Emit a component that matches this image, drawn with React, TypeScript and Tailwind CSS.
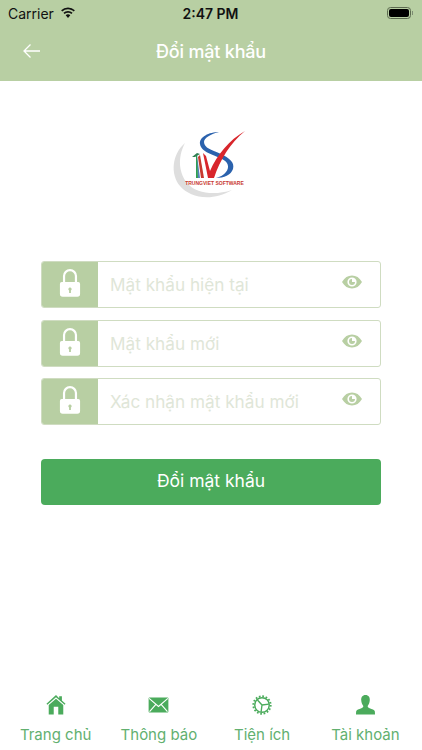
import React from "react";

const font = { fontFamily: "Inter, 'Noto Sans', sans-serif" };

function Lock() {
  return (
    <svg width="22" height="29" viewBox="0 0 24 31">
      <path d="M5.500 16V8.500a6.500 6.500 0 0 1 13 0V16" fill="none" stroke="#fff" strokeWidth="2.400" />
      <path fillRule="evenodd" fill="#fff" d="M3 15h18a2 2 0 0 1 2 2v11a3 3 0 0 1-3 3H4a3 3 0 0 1-3-3V17a2 2 0 0 1 2-2zm9 6a1.800 1.800 0 0 0-1 3.300V27h2v-2.700A1.800 1.800 0 0 0 12 21z" />
    </svg>
  );
}

function Eye() {
  return (
    <svg width="20" height="14" viewBox="0 0 20 14">
      <path fillRule="evenodd" fill="#b8cfa3" d="M0 7C2.500 2.600 6 .5 10 .5S17.500 2.600 20 7c-2.500 4.400-6 6.500-10 6.500S2.500 11.400 0 7zm10-4.600a4.600 4.600 0 1 0 0 9.200 4.600 4.600 0 0 0 0-9.200z" />
      <path fill="#b8cfa3" d="M10 4a3 3 0 1 0 3 3h-3z" />
    </svg>
  );
}

function Field({ label }: { label: string }) {
  return (
    <div className="flex h-[47px] items-stretch overflow-hidden rounded-[3px] border border-[#cfdcc1] bg-white">
      <div className="flex w-[56px] shrink-0 items-center justify-center bg-[#b8cfa3] pb-[4px]">
        <Lock />
      </div>
      <div className="flex flex-1 items-center justify-between pl-[12px] pr-[18px]">
        <span className="pt-[1px] text-[17.200px] text-[#dfe6d8]">{label}</span>
        <span className="mb-[5px] flex"><Eye /></span>
      </div>
    </div>
  );
}

function Tab({ label, icon }: { label: string; icon: React.ReactNode }) {
  return (
    <div className="flex flex-1 flex-col items-center">
      <div className="flex h-[20px] items-center justify-center">{icon}</div>
      <span className="mt-[10px] text-[15px] leading-[20px] text-[#62b070]">{label}</span>
    </div>
  );
}

export default function App() {
  return (
    <div style={font} className="flex h-[750px] w-[422px] flex-col overflow-hidden bg-white">
      <header className="h-[81px] shrink-0 bg-[#b8cfa3]">
        <div className="flex h-[24px] items-center justify-between pl-[8px] pr-[9px] pt-[2px] text-[#111]">
          <div className="flex w-[120px] items-center gap-[6px] text-[14px]">
            <span>Carrier</span>
            <svg width="16" height="12" viewBox="0 0 16 12">
              <path fill="#111" d="M8 2.300c2.200 0 4.200.9 5.700 2.300l1.200-1.300A10 10 0 0 0 8 .5a10 10 0 0 0-6.900 2.800l1.200 1.300A8.200 8.200 0 0 1 8 2.300z" />
              <path fill="#111" d="M8 5.700c1.300 0 2.500.5 3.400 1.300l1.200-1.300A6.600 6.600 0 0 0 8 3.900a6.600 6.600 0 0 0-4.600 1.800L4.600 7A5 5 0 0 1 8 5.700z" />
              <path fill="#111" d="M8 7.300c-.9 0-1.700.3-2.300.9L8 11l2.300-2.800c-.6-.6-1.400-.9-2.300-.9z" />
            </svg>
          </div>
          <span className="text-[14px] font-semibold">2:47 PM</span>
          <div className="flex w-[120px] justify-end">
            <div className="flex items-center">
              <div className="h-[12px] w-[24px] rounded-[3.500px] border border-[#5c6b50] p-[1px]">
                <div className="h-full w-full rounded-[2px] bg-black" />
              </div>
              <div className="ml-px h-[4px] w-px bg-[#7d8c72]" />
            </div>
          </div>
        </div>
        <div className="relative flex h-[55px] items-center justify-center">
          <svg className="absolute left-[22px] top-[19px]" width="19" height="16" viewBox="0 0 19 16">
            <path d="M18 8H2M8.500 1.500 2 8l6.500 6.500" fill="none" stroke="#fff" strokeWidth="1.300" />
          </svg>
          <span className="text-[18px] font-medium tracking-[-0.2px] text-white">Đổi mật khẩu</span>
        </div>
      </header>

      <main className="flex flex-1 flex-col">
        <div className="mt-[47px] flex justify-center pr-[8px]">
          <svg width="80" height="76" viewBox="0 0 80 76">
            <path d="M18 15C5 26 3 46 13 58c10 12 32 16 52 4-18 6-36 3-44-6C12 46 10 30 18 15z" fill="#dedede" />
            <path d="M52 4C42 4 32 9 33 16c1 8 14 11 22 15 6 3 8 8 4 13-2 3-6 5-10 6 8 0 15-3 17-9 2-7-4-11-12-15-9-4-17-6-17-12 0-4 7-8 15-10z" fill="#2b62ad" />
            <path d="M36 25l3 3 4 15C50 27 62 12 78 3 63 15 53 32 47 50h-6z" fill="#d8262c" />
            <path d="M33 27l4 23h-3l-3-21z" fill="#c8392f" />
            <path d="M30 27l3 23h-2l-2-21z" fill="#2b62ad" opacity="0.8" />
            <path d="M30 26h-1v24h2z" fill="#2f9e52" />
            <path d="M25 29l5-4 3 1-5 3z" fill="#2f7f52" />
            <text x="47.500" y="56.500" textAnchor="middle" fontSize="5" fontWeight="700" fill="#c8392f" fontFamily="'Liberation Sans', sans-serif">TRUNGVIET SOFTWARE</text>
          </svg>
        </div>

        <div className="mt-[57px] flex flex-col gap-[11.500px] px-[41px]">
          <Field label="Mật khẩu hiện tại" />
          <Field label="Mật khẩu mới" />
          <Field label="Xác nhận mật khẩu mới" />
          <div className="mt-[22px] flex h-[46px] items-center justify-center rounded-[4px] bg-[#4bab5c] text-[17.500px] text-white">
            Đổi mật khẩu
          </div>
        </div>
      </main>

      <nav className="mb-[5px] flex h-[50px] shrink-0 items-start pl-[4px] pr-[5px]">
        <Tab
          label="Trang chủ"
          icon={
            <svg width="20" height="20" viewBox="0 0 22 22">
              <path fill="#4bab5c" d="M11 0 .5 9.500l1 1.200L11 2.400l9.500 8.300 1-1.200L17.500 6V1.500h-3v2z" />
              <path fillRule="evenodd" fill="#4bab5c" d="M11 4 3 11v10.500h16V11zm-2.500 9h5v8.500h-5z" />
            </svg>
          }
        />
        <Tab
          label="Thông báo"
          icon={
            <svg width="21" height="16" viewBox="0 0 22 17">
              <rect width="21" height="16" x=".5" y=".5" rx="1" fill="#4bab5c" />
              <path d="M1 1.500 11 10l10-8.500M1.500 15.500l6.500-7.500M20.500 15.500 14 8" fill="none" stroke="#fff" strokeWidth="1.200" />
            </svg>
          }
        />
        <Tab
          label="Tiện ích"
          icon={
            <svg width="20" height="20" viewBox="0 0 22 22">
              <circle cx="11" cy="11" r="8" fill="none" stroke="#4bab5c" strokeWidth="1.600" />
              <circle cx="11" cy="11" r="9.600" fill="none" stroke="#4bab5c" strokeWidth="2" strokeDasharray="1.900 1.870" />
              <path d="M11 11 6 5.500M11 11l7.500-1M11 11l-1 7.500" fill="none" stroke="#4bab5c" strokeWidth="1.500" />
            </svg>
          }
        />
        <Tab
          label="Tài khoản"
          icon={
            <svg width="19" height="20" viewBox="0 0 20 21">
              <path fill="#4bab5c" d="M10 0c3.200 0 4.800 2.400 4.500 5.500-.2 2.500-1 4.500-2.200 6 0 1.200.5 1.800 2 2.300 2.800 1 5 1.500 5.500 3.200.1 1 .2 2 .2 3.500H0c0-1.500.1-2.500.2-3.500.5-1.700 2.700-2.200 5.500-3.200 1.500-.5 2-1.100 2-2.300-1.200-1.500-2-3.500-2.200-6C5.200 2.400 6.800 0 10 0z" />
            </svg>
          }
        />
      </nav>
    </div>
  );
}
